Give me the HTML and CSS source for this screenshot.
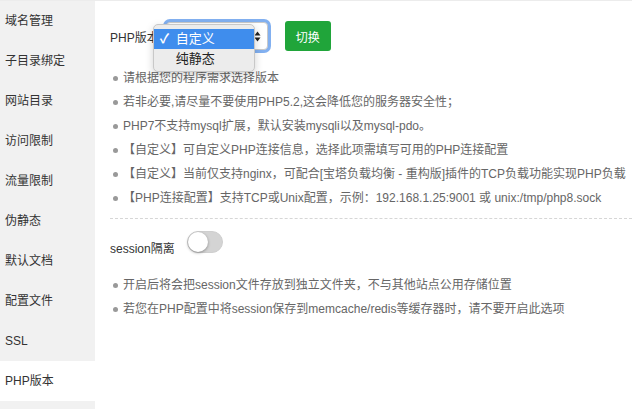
FILE: index.html
```html
<!DOCTYPE html>
<html lang="zh-CN">
<head>
  <meta charset="UTF-8" />
  <title>PHP版本</title>
  <link rel="stylesheet" href="styles.css">
</head>
<body>

  <div class="sidebar">
    <div class="side-item">域名管理</div>
    <div class="side-item">子目录绑定</div>
    <div class="side-item">网站目录</div>
    <div class="side-item">访问限制</div>
    <div class="side-item">流量限制</div>
    <div class="side-item">伪静态</div>
    <div class="side-item">默认文档</div>
    <div class="side-item">配置文件</div>
    <div class="side-item">SSL</div>
    <div class="side-item active">PHP版本</div>
    <div class="side-item"></div>
  </div>

  <div class="main">
    <div class="version-row">
      <span class="label">PHP版本</span>
      <div class="select-wrap">
        <div class="select-box">
          <span class="arrows">
            <svg width="7" height="11" viewBox="0 0 7 11"><path d="M3.5 0.5 L6.5 4.5 L0.5 4.5 Z M3.5 10.5 L6.5 6.5 L0.5 6.5 Z" fill="#222"/></svg>
          </span>
        </div>
        <div class="dropdown">
          <div class="option selected"><span class="check">✓</span>自定义</div>
          <div class="option">纯静态</div>
        </div>
      </div>
      <button class="btn-switch">切换</button>
    </div>

    <ul class="tips">
      <li>请根据您的程序需求选择版本</li>
      <li>若非必要,请尽量不要使用PHP5.2,这会降低您的服务器安全性；</li>
      <li>PHP7不支持mysql扩展，默认安装mysqli以及mysql-pdo。</li>
      <li>【自定义】可自定义PHP连接信息，选择此项需填写可用的PHP连接配置</li>
      <li>【自定义】当前仅支持nginx，可配合[宝塔负载均衡 - 重构版]插件的TCP负载功能实现PHP负载</li>
      <li>【PHP连接配置】支持TCP或Unix配置，示例：192.168.1.25:9001 或 unix:/tmp/php8.sock</li>
    </ul>

    <div class="divider"></div>

    <div class="session-row">
      <span class="label session-label">session隔离</span>
      <span class="toggle"><span class="knob"></span></span>
    </div>

    <ul class="tips session-tips">
      <li>开启后将会把session文件存放到独立文件夹，不与其他站点公用存储位置</li>
      <li>若您在PHP配置中将session保存到memcache/redis等缓存器时，请不要开启此选项</li>
    </ul>
  </div>

</body>
</html>
```

FILE: styles.css
```css
body {
  margin: 0;
  height: 408px;
  overflow: hidden;
  display: flex;
  flex-direction: row;
  font-family: "Liberation Sans", "Noto Sans CJK SC", sans-serif;
  font-size: 12px;
  color: #333;
  background: #fff;
  border-top: 1px solid #ececec;
}

.sidebar {
  width: 95px;
  flex-shrink: 0;
  background: #f1f1f1;
  display: flex;
  flex-direction: column;
  overflow: hidden;
}

.side-item {
  height: 40px;
  line-height: 40px;
  padding-left: 5px;
  font-size: 12px;
  color: #333;
  white-space: nowrap;
  flex-shrink: 0;
}

.side-item.active {
  background: #fff;
}

.main {
  flex: 1;
  padding-left: 15px;
  min-width: 0;
  overflow: hidden;
}

.version-row {
  display: flex;
  align-items: center;
  height: 30px;
  margin-top: 20px;
}

.label {
  color: #333;
  white-space: nowrap;
}

.select-wrap {
  position: relative;
  margin-left: 7px;
}

.select-box {
  width: 94px;
  height: 26px;
  border: 1px solid #c9c9c9;
  border-radius: 4px;
  background: #fff;
  box-shadow: 0 0 0 3px #82b0f0;
  display: flex;
  align-items: center;
  justify-content: flex-end;
  padding-right: 6px;
}

.arrows {
  display: flex;
}

.dropdown {
  position: absolute;
  left: -13px;
  top: 2px;
  width: 100px;
  padding: 4px 0 3px;
  background: #ececec;
  border: 1px solid #c8c8c8;
  border-radius: 5px;
  box-shadow: 0 3px 8px rgba(0, 0, 0, 0.18);
  z-index: 10;
}

.option {
  height: 19px;
  line-height: 19px;
  padding-left: 22px;
  font-size: 13px;
  color: #222;
  position: relative;
}

.option.selected {
  background: #3f8ded;
  color: #fff;
  height: 20px;
  line-height: 20px;
}

.check {
  position: absolute;
  left: 6px;
  font-weight: bold;
}

.btn-switch {
  margin-left: 17px;
  width: 46px;
  height: 30px;
  border: none;
  border-radius: 3px;
  background: #20a53a;
  color: #fff;
  font-family: inherit;
  font-size: 12px;
  padding: 0;
}

.tips {
  list-style: none;
  margin: 15px 0 0;
  padding: 0;
}

.tips li {
  position: relative;
  height: 24px;
  line-height: 24px;
  padding-left: 13px;
  color: #666;
  white-space: nowrap;
}

.tips li::before {
  content: "";
  position: absolute;
  left: 3px;
  top: 10px;
  width: 5px;
  height: 5px;
  border-radius: 50%;
  background: #999;
}

.divider {
  margin-top: 8px;
  border-top: 1px dashed #d6d6d6;
}

.session-row {
  display: flex;
  align-items: flex-start;
  margin-top: 11px;
  height: 31px;
}

.session-label {
  line-height: 24px;
  margin-top: 7px;
}

.toggle {
  width: 34px;
  height: 20px;
  margin-left: 12px;
  margin-top: 1px;
  border-radius: 11px;
  background: #d4d4d4;
  border: 1px solid #cfcfcf;
  position: relative;
}

.knob {
  position: absolute;
  left: 0;
  top: 0;
  width: 20px;
  height: 20px;
  border-radius: 50%;
  background: #fff;
  box-shadow: 0 1px 3px rgba(0, 0, 0, 0.35);
}

.session-tips {
  margin-top: 12px;
}
```
